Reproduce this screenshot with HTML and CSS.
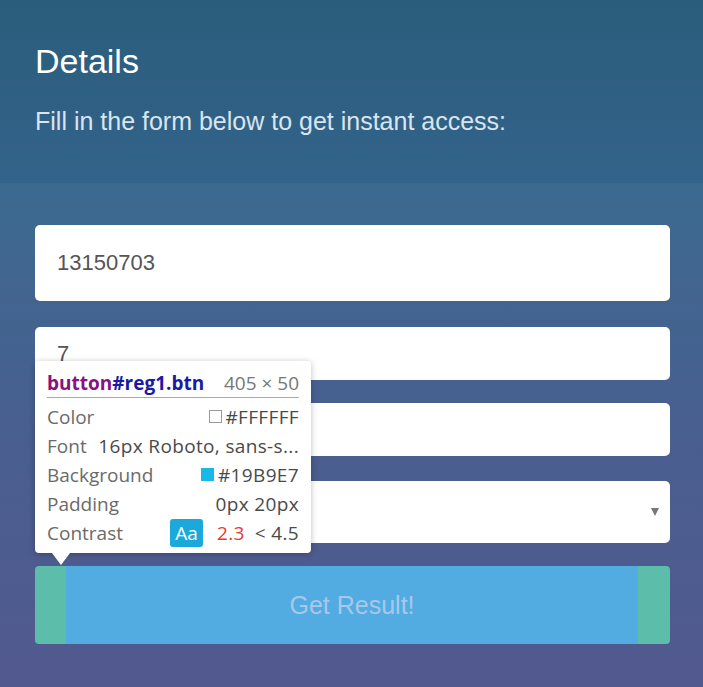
FILE: index.html
```
<!DOCTYPE html>
<html>
<head>
<meta charset="utf-8">
<link rel="stylesheet" href="styles.css">
</head>
<body>
<div class="page">
  <header class="intro">
    <h1 class="title">Details</h1>
    <p class="lead">Fill in the form below to get instant access:</p>
  </header>
  <form class="form">
    <div class="field field-tall"><span class="value">13150703</span></div>
    <div class="field field-mid"><span class="value">7</span></div>
    <div class="field field-mid"></div>
    <div class="field field-select"><span class="arrow"></span></div>
    <button type="button" class="btn">Get Result!</button>
  </form>
  <div class="tip">
    <div class="tip-head">
      <span class="sel"><span class="tag">button</span><span class="ident">#reg1.btn</span></span>
      <span class="dim">405 × 50</span>
    </div>
    <div class="tip-row"><span class="lab">Color</span><span class="val"><span class="sw sw-white"></span>#FFFFFF</span></div>
    <div class="tip-row"><span class="lab">Font</span><span class="val">16px Roboto, sans-s...</span></div>
    <div class="tip-row"><span class="lab">Background</span><span class="val"><span class="sw sw-blue"></span>#19B9E7</span></div>
    <div class="tip-row"><span class="lab">Padding</span><span class="val">0px 20px</span></div>
    <div class="tip-row"><span class="lab">Contrast</span><span class="val"><span class="aa">Aa</span><span class="bad">2.3</span><span class="lt">&lt; 4.5</span></span></div>
  </div>
</div>
</body>
</html>
```
FILE: styles.css
```
html, body {
  margin: 0;
  padding: 0;
}
body {
  width: 703px;
  height: 687px;
  overflow: hidden;
  font-family: "Liberation Sans", Arial, sans-serif;
}
.page {
  position: relative;
  height: 687px;
  background: linear-gradient(180deg, #3c6a8f 183px, #485f8f 420px, #52598e 687px);
}
.intro {
  height: 183px;
  box-sizing: border-box;
  padding: 41px 35px 0;
  background: linear-gradient(180deg, #2a5d7c 0%, #33638a 100%);
}
.title {
  margin: 0;
  font-size: 34px;
  line-height: 40px;
  font-weight: normal;
  color: #ffffff;
}
.lead {
  margin: 25px 0 0;
  font-size: 25px;
  line-height: 30px;
  color: #d9e5ef;
}
.form {
  display: flex;
  flex-direction: column;
  padding: 42px 33px 0 35px;
}
.field {
  background: #ffffff;
  border-radius: 5px;
  display: flex;
  align-items: center;
  padding: 0 22px;
  box-sizing: border-box;
  color: #555555;
  font-size: 22px;
}
.field-tall {
  height: 76px;
  margin-bottom: 26px;
}
.field-mid {
  height: 53px;
  margin-bottom: 23px;
}
.field-mid + .field-mid {
  margin-bottom: 25px;
}
.field-select {
  height: 62px;
  margin-bottom: 23px;
  justify-content: flex-end;
  padding-right: 11px;
}
.arrow {
  width: 0;
  height: 0;
  border-left: 4px solid transparent;
  border-right: 4px solid transparent;
  border-top: 8px solid #777777;
}
.btn {
  height: 78px;
  border: 0;
  border-radius: 4px;
  padding: 0 32px 0 31px;
  background: linear-gradient(#52ace1, #52ace1) content-box, #5cbdab;
  color: #a8c8ea;
  font-family: "Liberation Sans", Arial, sans-serif;
  font-size: 25px;
  cursor: pointer;
}
.tip {
  position: absolute;
  left: 35px;
  top: 361px;
  width: 276px;
  height: 192px;
  box-sizing: border-box;
  padding: 7px 12px 0;
  background: #ffffff;
  border-radius: 4px;
  box-shadow: 0 1px 6px rgba(0, 0, 0, 0.25);
  font-family: "Open Sans", "Noto Sans", sans-serif;
  font-size: 19px;
  color: #666666;
}
.tip::after {
  content: "";
  position: absolute;
  left: 17px;
  bottom: -12px;
  border-left: 9px solid transparent;
  border-right: 9px solid transparent;
  border-top: 12px solid #ffffff;
}
.tip-head {
  display: flex;
  justify-content: space-between;
  align-items: center;
  height: 29px;
  border-bottom: 1px solid #a8a8a8;
  margin-bottom: 4px;
}
.sel {
  font-weight: bold;
}
.tag {
  color: #881280;
}
.ident {
  color: #1a1aa6;
}
.dim {
  color: #777777;
}
.tip-row {
  display: flex;
  justify-content: space-between;
  align-items: center;
  height: 29px;
}
.lab {
  color: #6a6a6a;
}
.val {
  display: flex;
  align-items: center;
  color: #4a4a4a;
  letter-spacing: 0.35px;
}
.sw {
  display: inline-block;
  width: 13px;
  height: 13px;
  margin-right: 3px;
  box-sizing: border-box;
}
.sw-white {
  border: 1px solid #9a9a9a;
  background: #ffffff;
}
.sw-blue {
  background: #19b9e7;
  margin-right: 4px;
}
.aa {
  display: inline-flex;
  align-items: center;
  justify-content: center;
  width: 33px;
  height: 28px;
  border-radius: 3px;
  background: #1ba8da;
  color: #ffffff;
  letter-spacing: 0;
  margin-right: 14px;
}
.bad {
  color: #e53935;
  margin-right: 10px;
}
.lt {
  color: #4a4a4a;
}
```
